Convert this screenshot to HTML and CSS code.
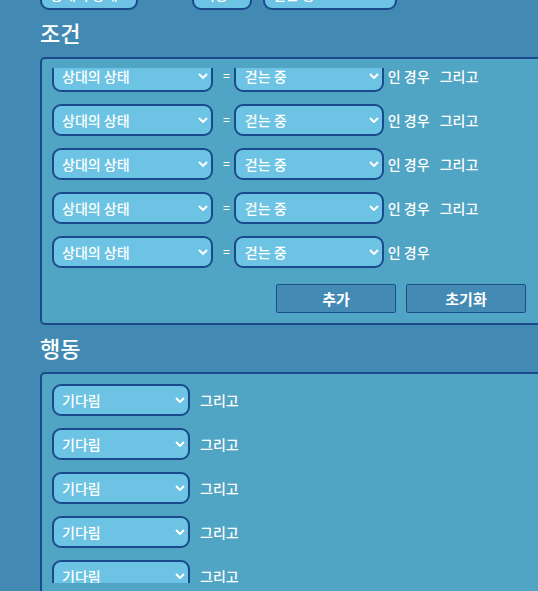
FILE: index.html
```
<!DOCTYPE html>
<html>
	<head>
		<meta charset="UTF-8">
		<title>조건과 행동</title>
		<link rel="stylesheet" href="styles.css">
	</head>
	<body>
		<div class="wrap">
			<div class="top-row">
				<div class="select top1"><span>상대의 상태</span><svg class="arrow" viewBox="0 0 10 6"><polyline points="1,1 5,5 9,1"/></svg></div>
				<div class="select top2"><span>이동</span><svg class="arrow" viewBox="0 0 10 6"><polyline points="1,1 5,5 9,1"/></svg></div>
				<div class="select top3"><span>걷는 중</span><svg class="arrow" viewBox="0 0 10 6"><polyline points="1,1 5,5 9,1"/></svg></div>
			</div>

			<h2 class="title">조건</h2>
			<div class="panel">
				<div class="list cond-list">
					<div class="list-inner">
						<div class="row">
							<div class="select cond-a"><span>상대의 상태</span><svg class="arrow" viewBox="0 0 10 6"><polyline points="1,1 5,5 9,1"/></svg></div>
							<span class="eq">=</span>
							<div class="select cond-b"><span>걷는 중</span><svg class="arrow" viewBox="0 0 10 6"><polyline points="1,1 5,5 9,1"/></svg></div>
							<span class="when">인 경우</span>
							<span class="and">그리고</span>
						</div>
						<div class="row">
							<div class="select cond-a"><span>상대의 상태</span><svg class="arrow" viewBox="0 0 10 6"><polyline points="1,1 5,5 9,1"/></svg></div>
							<span class="eq">=</span>
							<div class="select cond-b"><span>걷는 중</span><svg class="arrow" viewBox="0 0 10 6"><polyline points="1,1 5,5 9,1"/></svg></div>
							<span class="when">인 경우</span>
							<span class="and">그리고</span>
						</div>
						<div class="row">
							<div class="select cond-a"><span>상대의 상태</span><svg class="arrow" viewBox="0 0 10 6"><polyline points="1,1 5,5 9,1"/></svg></div>
							<span class="eq">=</span>
							<div class="select cond-b"><span>걷는 중</span><svg class="arrow" viewBox="0 0 10 6"><polyline points="1,1 5,5 9,1"/></svg></div>
							<span class="when">인 경우</span>
							<span class="and">그리고</span>
						</div>
						<div class="row">
							<div class="select cond-a"><span>상대의 상태</span><svg class="arrow" viewBox="0 0 10 6"><polyline points="1,1 5,5 9,1"/></svg></div>
							<span class="eq">=</span>
							<div class="select cond-b"><span>걷는 중</span><svg class="arrow" viewBox="0 0 10 6"><polyline points="1,1 5,5 9,1"/></svg></div>
							<span class="when">인 경우</span>
							<span class="and">그리고</span>
						</div>
						<div class="row">
							<div class="select cond-a"><span>상대의 상태</span><svg class="arrow" viewBox="0 0 10 6"><polyline points="1,1 5,5 9,1"/></svg></div>
							<span class="eq">=</span>
							<div class="select cond-b"><span>걷는 중</span><svg class="arrow" viewBox="0 0 10 6"><polyline points="1,1 5,5 9,1"/></svg></div>
							<span class="when">인 경우</span>
						</div>
					</div>
				</div>
				<div class="btns">
					<button class="btn">추가</button>
					<button class="btn">초기화</button>
				</div>
			</div>

			<h2 class="title">행동</h2>
			<div class="panel act-panel">
				<div class="list act-list">
					<div class="row">
						<div class="select act"><span>기다림</span><svg class="arrow" viewBox="0 0 10 6"><polyline points="1,1 5,5 9,1"/></svg></div>
						<span class="and">그리고</span>
					</div>
					<div class="row">
						<div class="select act"><span>기다림</span><svg class="arrow" viewBox="0 0 10 6"><polyline points="1,1 5,5 9,1"/></svg></div>
						<span class="and">그리고</span>
					</div>
					<div class="row">
						<div class="select act"><span>기다림</span><svg class="arrow" viewBox="0 0 10 6"><polyline points="1,1 5,5 9,1"/></svg></div>
						<span class="and">그리고</span>
					</div>
					<div class="row">
						<div class="select act"><span>기다림</span><svg class="arrow" viewBox="0 0 10 6"><polyline points="1,1 5,5 9,1"/></svg></div>
						<span class="and">그리고</span>
					</div>
					<div class="row">
						<div class="select act"><span>기다림</span><svg class="arrow" viewBox="0 0 10 6"><polyline points="1,1 5,5 9,1"/></svg></div>
						<span class="and">그리고</span>
					</div>
					<div class="row">
						<div class="select act"><span>기다림</span><svg class="arrow" viewBox="0 0 10 6"><polyline points="1,1 5,5 9,1"/></svg></div>
						<span class="and">그리고</span>
					</div>
				</div>
			</div>
		</div>
	</body>
</html>
```

FILE: styles.css
```
html{
	overflow: hidden;
}
body{
	margin: 0;
	background-color: #428ab3;
	color: #fff;
	font-family: "Noto Sans CJK KR", sans-serif;
	font-size: 14px;
	font-weight: 500;
}
.wrap{
	padding-left: 40px;
	margin-top: -22px;
}
.top-row{
	display: flex;
	height: 32px;
}
.top1{
	width: 98px;
}
.top2{
	width: 60px;
	margin-left: 54px;
}
.top3{
	width: 134px;
	margin-left: 11px;
}
.title{
	margin: 5px 0 8px 0;
	font-size: 22px;
	line-height: 34px;
	font-weight: 500;
}
.panel{
	width: 520px;
	box-sizing: border-box;
	border: 2px solid #1a4a8b;
	border-radius: 5px;
	background-color: #50a4c4;
	padding: 9px 32px 10px 10px;
}
.list{
	overflow: hidden;
}
.cond-list{
	height: 200px;
}
.list-inner{
	margin-top: -8px;
}
.row{
	display: flex;
	align-items: center;
	height: 32px;
	margin-bottom: 12px;
}
.select{
	display: flex;
	align-items: center;
	justify-content: space-between;
	height: 32px;
	box-sizing: border-box;
	border: 2px solid #1a4a8b;
	border-radius: 9px;
	background-color: #6cc3e3;
	padding: 0 3px 0 8px;
	white-space: nowrap;
	overflow: hidden;
}
.arrow{
	width: 10px;
	height: 6px;
	flex: none;
}
.arrow polyline{
	fill: none;
	stroke: #fff;
	stroke-width: 2;
}
.cond-a{
	width: 161px;
}
.cond-b{
	width: 150px;
	padding-left: 9px;
}
.eq{
	font-size: 12px;
	margin: 0 4px 0 10px;
	position: relative;
	top: -2px;
}
.when{
	margin-left: 4px;
}
.and{
	margin-left: 10px;
}
.btns{
	display: flex;
	justify-content: flex-end;
	margin-top: 16px;
}
.btn{
	width: 120px;
	height: 29px;
	margin-left: 10px;
	border: 1px solid #1c4c8a;
	border-radius: 2px;
	background-color: #438ab4;
	color: #fff;
	font-family: inherit;
	font-size: 15px;
	font-weight: bold;
	padding: 0;
}
.act-panel{
	padding-top: 10px;
}
.act-list{
	height: 199px;
}
.act{
	width: 138px;
}
```
